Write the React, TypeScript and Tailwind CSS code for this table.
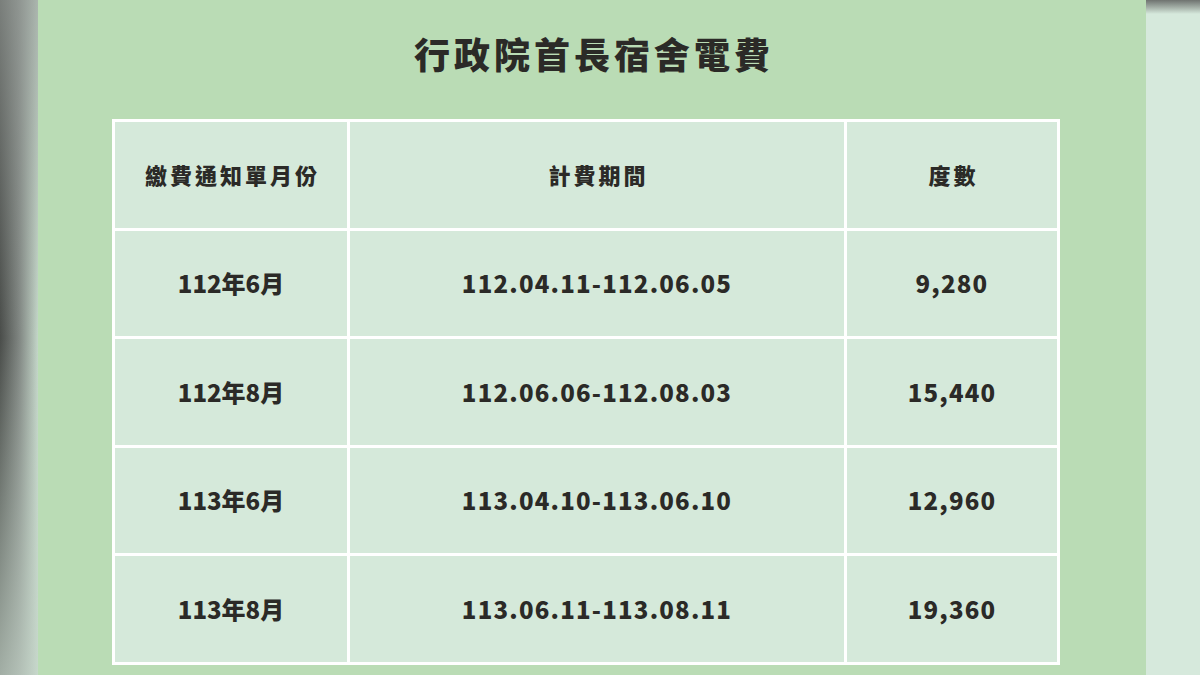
import React from 'react';

const rows = [
	{ month: '112年6月', period: '112.04.11-112.06.05', units: '9,280' },
	{ month: '112年8月', period: '112.06.06-112.08.03', units: '15,440' },
	{ month: '113年6月', period: '113.04.10-113.06.10', units: '12,960' },
	{ month: '113年8月', period: '113.06.11-113.08.11', units: '19,360' },
];

const font = { fontFamily: '"Noto Sans CJK TC", "Noto Sans", sans-serif' };

export default function App() {
	return (
		<div className="flex w-[1200px] h-[675px] overflow-hidden text-[#2b2a27]" style={font}>
			{/* blurred edge on the left */}
			<div className="relative w-[38px] shrink-0 bg-gradient-to-r from-[#4a4d4a] via-[#7f8581] to-[#c3d6c8]">
				<div className="absolute inset-0 bg-gradient-to-b from-[#9aa09c]/60 via-transparent to-[#c8d8cc]/70" />
			</div>

			<div className="flex-1 bg-[#badcb5]">
				<h1 className="pt-[32px] text-center text-[36px] leading-[42px] font-black tracking-[4px] pl-[4px]">
					行政院首長宿舍電費
				</h1>

				<div className="ml-[74px] mt-[45px] w-[948px] grid grid-cols-[232px_494px_210px] gap-[3px] p-[3px] bg-white">
					<div className="h-[105.5px] bg-[#d5e9da] flex items-center justify-center text-[22px] font-black tracking-[3px] pl-[3px]">
						繳費通知單月份
					</div>
					<div className="h-[105.5px] bg-[#d5e9da] flex items-center justify-center text-[22px] font-black tracking-[3px] pl-[3px]">
						計費期間
					</div>
					<div className="h-[105.5px] bg-[#d5e9da] flex items-center justify-center text-[22px] font-black tracking-[3px] pl-[3px]">
						度數
					</div>
					{rows.map((r) => (
						<React.Fragment key={r.month}>
							<div className="h-[105.5px] bg-[#d5e9da] flex items-center justify-center text-[24px] font-extrabold">
								{r.month}
							</div>
							<div className="h-[105.5px] bg-[#d5e9da] flex items-center justify-center text-[24px] font-extrabold tracking-[1.2px]">
								{r.period}
							</div>
							<div className="h-[105.5px] bg-[#d5e9da] flex items-center justify-center text-[24px] font-extrabold tracking-[1.2px]">
								{r.units}
							</div>
						</React.Fragment>
					))}
				</div>
			</div>

			{/* light strip on the right */}
			<div className="relative w-[54px] shrink-0 bg-[#d6e9dc]">
				<div className="absolute top-0 left-0 right-0 h-[14px] bg-gradient-to-b from-[#6f7370] to-[#d6e9dc]" />
			</div>
		</div>
	);
}
